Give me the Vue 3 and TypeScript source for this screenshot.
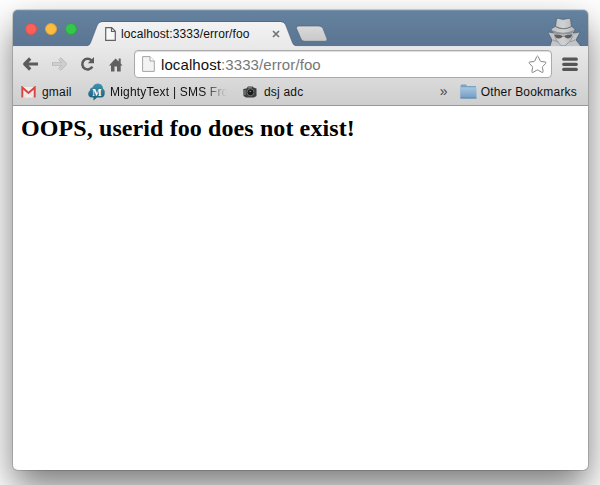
<script setup lang="ts">
interface Bookmark {
  id: string
  label: string
}

const host = 'localhost'
const path = ':3333/error/foo'
const lights: string[] = ['close', 'minimize', 'zoom']
const bookmarks: Bookmark[] = [
  { id: 'gmail', label: 'gmail' },
  { id: 'mighty', label: 'MightyText | SMS Fro' },
  { id: 'camera', label: 'dsj adc' },
]
</script>

<template>
  <div class="desktop">
    <div class="window">
      <header class="titlebar">
        <div class="lights">
          <span v-for="l in lights" :key="l" class="light" :class="l"></span>
        </div>
        <div class="tab">
          <svg class="tab-shape" width="214" height="26" viewBox="0 0 214 26">
            <defs>
              <linearGradient id="tabFill" x1="0" y1="0" x2="0" y2="1">
                <stop offset="0" stop-color="#f3f3f3" />
                <stop offset="1" stop-color="#e9e9e9" />
              </linearGradient>
            </defs>
            <path d="M0 25Q2.500 24.500 3.500 22L10 5Q11.500 1 15 1H193.500Q197.500 1 199 5L205.500 22Q206.500 24.500 209 25V26H0Z" fill="url(#tabFill)" />
            <path d="M0 24.500Q2.500 24.500 3.500 22L10 5Q11.500 .5 15 .5H193.500Q197.500 .5 199 5L205.500 22Q206.500 24.500 209 24.500" fill="none" stroke="#3f556d" stroke-opacity=".6" stroke-width=".8" />
          </svg>
          <svg class="tab-page" width="11" height="14" viewBox="0 0 11 14">
            <path d="M.7.7H6.700L10.300 4.300V13.300H.7ZM6.500.7V4.500H10.300" fill="#f8f8f8" stroke="#626262" stroke-width="1.200" />
          </svg>
          <span class="tab-title">{{ host }}{{ path }}</span>
          <svg class="tab-close" width="8" height="8" viewBox="0 0 8 8">
            <path d="M1 1L7 7M7 1L1 7" stroke="#757575" stroke-width="1.700" />
          </svg>
        </div>
        <svg class="new-tab" width="34" height="18" viewBox="0 0 34 18">
          <defs>
            <linearGradient id="newFill" x1="0" y1="0" x2="0" y2="1">
              <stop offset="0" stop-color="#dadada" />
              <stop offset="1" stop-color="#c8c8c8" />
            </linearGradient>
          </defs>
          <path d="M3.500 1H24Q27 1 28 3.500L32 13.700Q32.500 16.300 30 16.300H9.500Q7 16.300 6 14L1.500 3.500Q1 1 3.500 1Z" fill="url(#newFill)" stroke="#4a627c" stroke-opacity=".65" />
        </svg>
        <svg class="incognito" width="38" height="30" viewBox="0 0 38 30">
          <defs>
            <linearGradient id="spy" x1="0" y1="0" x2="1" y2="0">
              <stop offset="0" stop-color="#b9bbbd" />
              <stop offset=".45" stop-color="#d0d1d2" />
              <stop offset="1" stop-color="#a9abad" />
            </linearGradient>
          </defs>
          <path d="M6 30L8 24 4 16 10 17 7 14Q7 12 11.500 10.500L12.500 3 14 2.300 19 3.500 25 2.300 26.500 3.200 27.500 10.500Q31 12 31 14L29 17 36 16 32 24 37 30Z" fill="url(#spy)" stroke="#41576c" stroke-opacity=".6" />
          <path d="M11.500 10.500Q19 15 27.500 10.500" fill="none" stroke="#77797b" stroke-width="1.200" />
          <path d="M8 14Q19 19.500 30 14L28 17.500Q19 19.500 10 17.500Z" fill="#929597" />
          <path d="M10 18.500Q14.500 18 18.500 19.700H20.500Q24 18 28.500 18.500 27 22.500 24 22.500 21.500 22.500 20.500 20.500H18.500Q17.500 22.500 15 22.500 11 22.500 10 18.500Z" fill="#5c5e61" />
          <path d="M4.500 16.500L11 20Q12 25 17 29.500L15 30H6.500L9 24ZM35.500 16.500L29 20Q27 25 21 30H36L31 24Z" fill="#c2c4c6" />
          <path d="M10.500 20Q12 25 17 29.500M29 20Q27 25 21 30M9 24L14 26M31 24L26 26" fill="none" stroke="#8b8e91" stroke-width=".8" />
        </svg>
      </header>

      <div class="chrome">
        <nav class="toolbar">
          <svg class="nav back" width="17" height="16" viewBox="0 0 17 16">
            <path d="M8.200 2.500L2.700 8L8.200 13.500M3 8H16" fill="none" stroke="#5b5b5b" stroke-width="3.200" stroke-linejoin="round" />
          </svg>
          <svg class="nav forward" width="17" height="16" viewBox="0 0 17 16">
            <path d="M8.500 2.500L14 8L8.500 13.500M14 8H1" fill="none" stroke="#b8b8b8" stroke-width="3.600" stroke-linejoin="round" />
            <path d="M8.500 2.500L14 8L8.500 13.500M14 8H2" fill="none" stroke="#cfcfcf" stroke-width="2" stroke-linejoin="round" />
          </svg>
          <svg class="nav reload" width="15" height="16" viewBox="0 0 15 16">
            <path d="M11.500 4.500A5.300 5.300 0 1 0 12.300 10.600" fill="none" stroke="#5b5b5b" stroke-width="2.500" />
            <path d="M14 1V7.200H7.800Z" fill="#5b5b5b" />
          </svg>
          <svg class="nav home" width="14" height="15" viewBox="0 0 14 15">
            <path d="M6.500 1.500L9.700 4.500V1.500H11.700V6.500L13.500 8.500H11.700V14.500H8V9.500H5.500V14.500H2V8.500H0Z" fill="#606060" />
          </svg>
          <div class="omnibox">
            <svg class="page" width="13" height="16" viewBox="0 0 13 16">
              <path d="M.6.6H8L12.300 5V15.400H.6Z" fill="#f3f3f3" stroke="#a4a4a4" />
              <path d="M8 .6V5H12.300" fill="#fff" stroke="#a4a4a4" />
            </svg>
            <span class="url"><span class="host">{{ host }}</span>{{ path }}</span>
            <svg class="star" width="19" height="19" viewBox="0 0 19 19">
              <path d="M8.700 1.700Q9.500.3 10.300 1.700L12.200 5.900Q12.500 6.400 13.100 6.500L17.200 7Q18.700 7.300 17.600 8.500L14.700 11.400Q14.300 11.800 14.400 12.400L15.100 16.400Q15.200 18 13.800 17.300L10.200 15.200Q9.500 14.900 8.800 15.200L5.200 17.300Q3.800 18 3.900 16.400L4.600 12.400Q4.700 11.800 4.300 11.400L1.400 8.500Q.3 7.300 1.800 7L5.900 6.500Q6.500 6.400 6.800 5.900Z" fill="#fff" stroke="#858585" />
            </svg>
          </div>
          <svg class="menu" width="16" height="15" viewBox="0 0 16 15">
            <path d="M1.700 2.200H14.300M1.700 7.300H14.300M1.700 12.400H14.300" stroke="#555" stroke-width="3.200" stroke-linecap="round" />
          </svg>
        </nav>

        <nav class="bookmarks">
          <div v-for="b in bookmarks" :key="b.id" class="bookmark" :class="b.id">
            <svg v-if="b.id === 'gmail'" width="15" height="12" viewBox="0 0 15 12">
              <path d="M.5 1H14.500V11.500H.5Z" fill="#f0eeed" />
              <path d="M1.300 11.500V1.500L7.500 7L13.700 1.500V11.500" fill="none" stroke="#d5473f" stroke-width="2" />
              <path d="M3 11L6 7M12 11L9 7" stroke="#d5d5d5" stroke-width=".7" />
            </svg>
            <svg v-else-if="b.id === 'mighty'" width="17" height="18" viewBox="0 0 17 18">
              <defs>
                <linearGradient id="cloud" x1="0" y1="0" x2="0" y2="1">
                  <stop offset="0" stop-color="#4095ae" />
                  <stop offset="1" stop-color="#155a77" />
                </linearGradient>
              </defs>
              <path d="M4.500 4.500Q6 .5 10 .5Q14.500 .7 15 5.500Q17 7 16.700 10.500Q16.500 14.500 13 14.500H9L5.500 17.500V14.500H4Q.2 14.500 .2 10.800Q.3 8.400 2 7.500Q1.800 4.800 4.500 4.500Z" fill="url(#cloud)" />
              <text x="9" y="12.500" text-anchor="middle" class="cloud-letter">M</text>
            </svg>
            <svg v-else width="14" height="12" viewBox="0 0 14 12">
              <path d="M.3 3L3.500 2.500 5 .5H9.500L10.500 1.500 13.500 2.500V10L11 11.500H3L.5 10Z" fill="#3c3f3f" />
              <circle cx="7.500" cy="6.300" r="3.500" fill="#191b1b" stroke="#6b7070" />
              <path d="M2 4V9M6.500 5.500H8M5 1.800H9" stroke="#8c9090" stroke-width="1" />
            </svg>
            <span class="label">{{ b.label }}</span>
          </div>
          <span class="overflow">»</span>
          <div class="other">
            <svg width="17" height="16" viewBox="0 0 17 16">
              <defs>
                <linearGradient id="folder" x1="0" y1="0" x2="0" y2="1">
                  <stop offset="0" stop-color="#a8c7e1" />
                  <stop offset="1" stop-color="#719bc3" />
                </linearGradient>
              </defs>
              <path d="M.5 3V1.500L1.500.5H6L7 2H16V14.300H.5Z" fill="#7ba1c3" />
              <path d="M.5 3.300H16.500V14.300H.5Z" fill="url(#folder)" />
              <path d="M.5 14H16.500" stroke="#5e87ae" />
            </svg>
            <span class="label">Other Bookmarks</span>
          </div>
        </nav>
      </div>

      <main class="page-content">
        <h2>OOPS, userid foo does not exist!</h2>
      </main>
    </div>
  </div>
</template>

<style>
body {
  margin: 0;
  background: #fff;
}
</style>

<style scoped>
.desktop {
  box-sizing: border-box;
  width: 600px;
  height: 485px;
  padding: 10px 12px 15px 13px;
  overflow: hidden;
  font-family: "Liberation Sans", Arial, sans-serif;
}
.window {
  display: flex;
  flex-direction: column;
  height: 460px;
  border-radius: 5px;
  background: #fff;
  box-shadow: 0 0 0 1px rgba(0, 0, 0, .15), 0 17px 36px rgba(0, 0, 0, .53);
}
.titlebar {
  box-sizing: border-box;
  display: flex;
  height: 36px;
  border-radius: 5px 5px 0 0;
  background: linear-gradient(#64829f, #5b7592);
  box-shadow: inset 0 1px #7590a9;
}
.lights {
  display: flex;
  gap: 8px;
  width: 62px;
  padding: 13px 0 0 12px;
}
.light {
  box-sizing: border-box;
  width: 12px;
  height: 12px;
  border-radius: 50%;
}
.close { background: #fc605b; border: 1px solid #df504d; }
.minimize { background: #fdbc40; border: 1px solid #dda13b; }
.zoom { background: #34c749; border: 1px solid #2ca73e; }
.tab {
  position: relative;
  z-index: 1;
  display: flex;
  align-items: center;
  box-sizing: border-box;
  width: 210px;
  height: 26px;
  margin-top: 11px;
  padding-left: 18px;
}
.tab-shape {
  position: absolute;
  left: 0;
  top: 0;
}
.tab-page,
.tab-title,
.tab-close {
  position: relative;
}
.tab-title {
  width: 151px;
  margin: 0 0 1px 5px;
  color: #111;
  font-size: 12px;
  letter-spacing: .1px;
  white-space: nowrap;
}
.new-tab {
  margin: 15px 0 0 -2px;
}
.incognito {
  margin: 6px 6px 0 auto;
}
.chrome {
  box-sizing: border-box;
  height: 60px;
  border-top: 1px solid #e0e4e8;
  border-bottom: 1px solid #999;
  background: linear-gradient(#e9e9e9, #cecece);
}
.toolbar {
  display: flex;
  align-items: center;
  height: 34px;
}
.nav { flex: none; }
.back { margin-left: 9px; }
.forward { margin-left: 12px; }
.reload { margin-left: 12px; }
.home { margin-left: 14px; }
.omnibox {
  box-sizing: border-box;
  display: flex;
  align-items: center;
  width: 418px;
  height: 28px;
  margin-left: 11px;
  padding: 0 4px 0 7px;
  border: 1px solid #aaa;
  border-radius: 4px;
  background: #fff;
  box-shadow: inset 0 1px 1px #ddd;
}
.url {
  margin-left: 6px;
  color: #777;
  font-size: 15px;
  letter-spacing: .09px;
  white-space: nowrap;
}
.host { color: #111; }
.star { margin-left: auto; }
.menu { margin-left: 10px; }
.bookmarks {
  display: flex;
  align-items: center;
  height: 22px;
  color: #111;
  font-size: 12px;
  letter-spacing: .2px;
}
.bookmark,
.other {
  display: flex;
  align-items: center;
  white-space: nowrap;
}
.gmail { width: 67px; padding-left: 8px; gap: 6px; }
.mighty { width: 155px; gap: 5px; }
.mighty .label {
  width: 117px;
  overflow: hidden;
  -webkit-mask-image: linear-gradient(90deg, #000 80%, transparent 100%);
  mask-image: linear-gradient(90deg, #000 80%, transparent 100%);
}
.camera { gap: 7px; }
.cloud-letter {
  fill: #fff;
  font: bold 10px "Liberation Serif", serif;
  letter-spacing: 0;
}
.overflow {
  margin: 0 12px 2px auto;
  color: #444;
  font-size: 14px;
  letter-spacing: 0;
}
.other {
  gap: 4px;
  margin-right: 11px;
}
.page-content {
  padding: 8px;
}
h2 {
  margin: 0;
  color: #000;
  font: bold 24px/28px "Liberation Serif", "Times New Roman", serif;
  letter-spacing: .1px;
  white-space: nowrap;
}
</style>
